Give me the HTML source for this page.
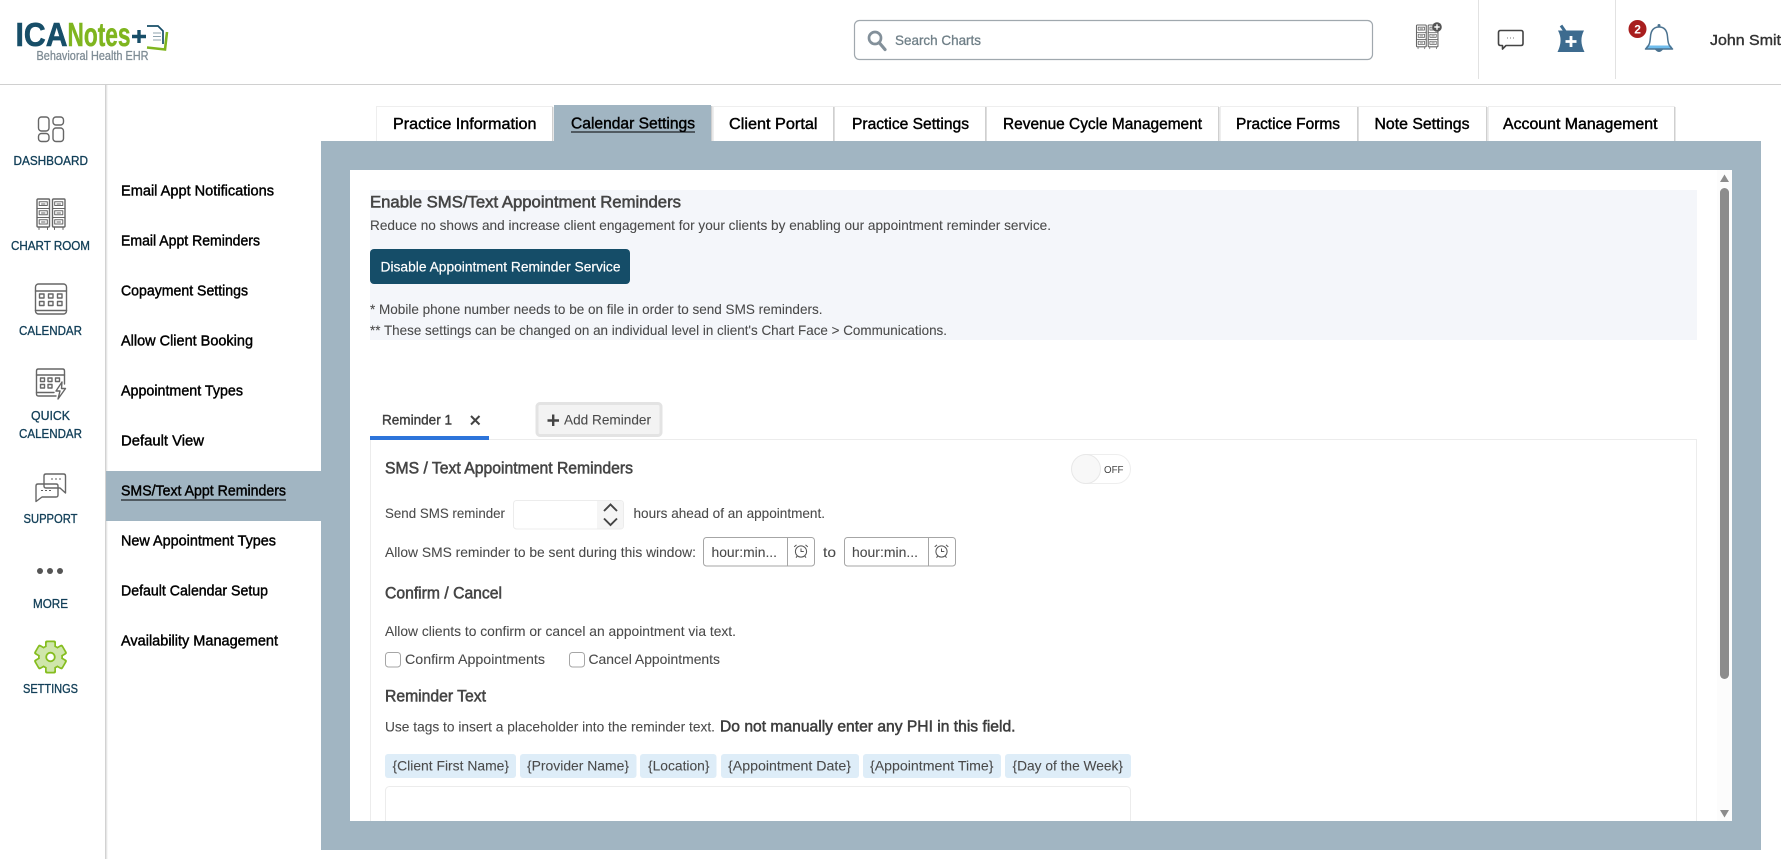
<!DOCTYPE html>
<html lang="en">
<head>
<meta charset="utf-8">
<title>ICANotes - Calendar Settings</title>
<style>
html,body{margin:0;padding:0;background:#fff;width:1781px;height:859px;overflow:hidden}
svg{display:block}
text{font-family:"Liberation Sans",sans-serif;white-space:pre}
.nav{font-size:12.5px;fill:#123f58;stroke:#123f58;stroke-width:.32}
.sub{font-size:14.5px;fill:#000;stroke:#000;stroke-width:.42}
.tab{font-size:15.5px;fill:#000;stroke:#000;stroke-width:.42}
.b{font-size:14px;fill:#4a4a4a;stroke:#4a4a4a;stroke-width:.08}
.h{font-size:16.5px;fill:#454545;stroke:#454545;stroke-width:.55}
.chip{font-size:14px;fill:#4a4a4a;stroke:#4a4a4a;stroke-width:.08}
.ic{fill:none;stroke:#666;stroke-width:1.4;stroke-linejoin:round;stroke-linecap:round}
</style>
</head>
<body>
<svg xmlns="http://www.w3.org/2000/svg" width="1781" height="859" viewBox="0 0 1781 859">
<defs>
<linearGradient id="sh" x1="0" x2="1" y1="0" y2="0"><stop offset="0" stop-color="#dedede"/><stop offset="1" stop-color="#fff"/></linearGradient>
<g id="cab" class="ic">
<rect x="0" y="0" width="12.5" height="28" rx="1"/>
<path d="M0 9.5H12.5M0 18.5H12.5M2 28.8V30.5M10.5 28.8V30.5M2.2 2.8H10.3V6.5H2.2ZM2.2 11.8H10.3V15.8H2.2ZM2.2 20.8H10.3V25H2.2ZM4.5 5H8M4.5 14H8M4.5 23H8" stroke-width="1"/>
</g>
<g id="clock" fill="none" stroke="#555" stroke-width="1">
<circle cx="0" cy="0" r="5.6"/>
<path d="M0 -3V0H2.8M-4.5 -6.6L-6.8 -4.6M4.5 -6.6L6.8 -4.6M-3.8 4.6L-5 6.2M3.8 4.6L5 6.2"/>
</g>
</defs>

<!-- page / header -->
<rect width="1781" height="859" fill="#fff"/>
<rect x="0" y="84" width="1781" height="1" fill="#d0d0d0"/>
<rect x="105" y="85" width="1" height="774" fill="#d2d2d2"/>
<rect x="106" y="85" width="2" height="774" fill="url(#sh)"/>

<!-- logo -->
<text x="15.500" y="46" font-weight="700" fill="#174e68" stroke="#174e68" stroke-width=".6" textLength="52" lengthAdjust="spacingAndGlyphs" style="font-size:33px">ICA</text>
<text x="67.500" y="46" font-weight="700" fill="#7fb51f" stroke="#7fb51f" stroke-width=".5" textLength="63" lengthAdjust="spacingAndGlyphs" style="font-size:33px">Notes</text>
<path d="M132 36.500H146M139 30V43" stroke="#174e68" stroke-width="3.400" fill="none"/>
<path d="M147 26H158L163 31V44" fill="none" stroke="#174e68" stroke-width="1.700"/>
<path d="M147 47.500L165 49.500L167 32" fill="none" stroke="#7fb51f" stroke-width="2.600"/>
<path d="M153 33H161M153 36.500H161M153 40H161" stroke="#8fa3ae" stroke-width="1"/>
<text x="36.500" y="60" style="font-size:13px;fill:#7f8c95;stroke:#7f8c95;stroke-width:.3" textLength="112" lengthAdjust="spacingAndGlyphs">Behavioral Health EHR</text>

<!-- search -->
<rect x="854.500" y="20.500" width="518" height="39" rx="5" fill="#fff" stroke="#a0a8ae" stroke-width="1.200"/>
<circle cx="875" cy="38" r="6" fill="none" stroke="#83909a" stroke-width="2.700"/>
<path d="M879.500 43L885 49.500" stroke="#83909a" stroke-width="3.200" stroke-linecap="round"/>
<text x="895" y="45" style="font-size:14px;fill:#6f7f87;stroke:#6f7f87;stroke-width:.3" textLength="86" lengthAdjust="spacingAndGlyphs">Search Charts</text>

<!-- header icons -->
<g transform="translate(1416.500,25) scale(.78)"><use href="#cab"/><use href="#cab" x="15"/></g>
<circle cx="1437" cy="27" r="4.800" fill="#555"/>
<path d="M1434.300 27H1439.700M1437 24.300V29.700" stroke="#fff" stroke-width="1.400"/>
<rect x="1478" y="0" width="1" height="79" fill="#e2e2e2"/>
<rect x="1615" y="0" width="1" height="79" fill="#e2e2e2"/>
<path d="M1500.500 30.500H1521Q1523 30.500 1523 32.500V43.500Q1523 45.500 1521 45.500H1506L1502.500 49V45.500H1500.500Q1498.500 45.500 1498.500 43.500V32.500Q1498.500 30.500 1500.500 30.500Z" fill="#fff" stroke="#444" stroke-width="1.600" stroke-linejoin="round"/>
<path d="M1507 38H1508M1510 38H1511M1513 38H1514" stroke="#777" stroke-width="1"/>
<path d="M1558 30.500H1584C1580.500 37 1580.500 44 1584.500 52H1557.500C1561.500 44 1561.500 37 1558 30.500Z" fill="#3d6b8f"/>
<path d="M1561 25.500L1565.500 32" stroke="#3d6b8f" stroke-width="3"/>
<path d="M1571 36V47M1565.500 41.500H1576.500" stroke="#fff" stroke-width="2.800"/>
<path d="M1647 45.500H1671L1673 49H1645Z" fill="#6fbcec"/>
<path d="M1645.500 49C1650 45 1650 42 1650.500 36.500C1651 30 1654 27 1659 27C1664 27 1667 30 1667.500 36.500C1668 42 1668 45 1672.500 49Z" fill="none" stroke="#4c7390" stroke-width="1.500" stroke-linejoin="round"/>
<circle cx="1659" cy="25.500" r="1.500" fill="#4c7390"/>
<path d="M1655 49.500Q1659 54.500 1663 49.500Z" fill="#4c7390"/>
<circle cx="1637.500" cy="29" r="9" fill="#a81e1e"/>
<text x="1634.300" y="33.500" style="font-size:12px;font-weight:700;fill:#fff">2</text>
<text x="1710" y="45" style="font-size:15px;fill:#333;stroke:#333;stroke-width:.4" textLength="71" lengthAdjust="spacingAndGlyphs">John Smit</text>

<!-- left nav -->
<g class="ic">
<rect x="38.500" y="117" width="10.500" height="14" rx="3"/>
<rect x="53" y="117" width="10.500" height="8" rx="3"/>
<rect x="38.500" y="133.500" width="10.500" height="8" rx="3"/>
<rect x="53" y="128" width="10.500" height="13.500" rx="3"/>
</g>
<text class="nav" x="13.500" y="165" textLength="74.500" lengthAdjust="spacingAndGlyphs">DASHBOARD</text>

<use href="#cab" x="37" y="199"/><use href="#cab" x="52.500" y="199"/>
<text class="nav" x="11" y="250" textLength="79" lengthAdjust="spacingAndGlyphs">CHART ROOM</text>

<g class="ic">
<rect x="35.500" y="284" width="31" height="30" rx="3"/>
<path d="M35.500 291H66.500M35.500 310.500H66.500"/>
<rect x="39.500" y="294" width="4.500" height="4"/><rect x="48.500" y="294" width="4.500" height="4"/><rect x="57.500" y="294" width="4.500" height="4"/>
<rect x="39.500" y="301.500" width="4.500" height="4"/><rect x="48.500" y="301.500" width="4.500" height="4"/><rect x="57.500" y="301.500" width="4.500" height="4"/>
</g>
<text class="nav" x="19" y="335" textLength="63" lengthAdjust="spacingAndGlyphs">CALENDAR</text>

<g class="ic" stroke-width="1.200">
<path d="M56 396H38.500Q36.500 396 36.500 394V371Q36.500 369 38.500 369H62.500Q64.500 369 64.500 371V384"/>
<path d="M36.500 375H64.500M36.500 392.500H54"/>
<rect x="40.500" y="378" width="4" height="3.500"/><rect x="48" y="378" width="4" height="3.500"/><rect x="55.500" y="378" width="4" height="3.500"/>
<rect x="40.500" y="384.500" width="4" height="3.500"/><rect x="48" y="384.500" width="4" height="3.500"/>
<path d="M62 382L56 391H60L58 399L65.500 388.500H61.500Z" fill="#fff"/>
</g>
<text class="nav" x="31" y="420" textLength="39" lengthAdjust="spacingAndGlyphs">QUICK</text>
<text class="nav" x="19" y="438" textLength="63" lengthAdjust="spacingAndGlyphs">CALENDAR</text>

<g class="ic" stroke-width="1.300">
<path d="M46 474H63.500Q65.500 474 65.500 476V493L60 488H46Q44 488 44 486V476Q44 474 46 474Z"/>
<path d="M38 484H56Q58 484 58 486V495Q58 497 56 497H42L36 501.500V486Q36 484 38 484Z"/>
</g>
<path d="M51 479H53M55 479H57M59 479H61M41 490.500H43M45 490.500H47M49 490.500H51" stroke="#5c5c5c" stroke-width="1"/>
<text class="nav" x="23.500" y="523" textLength="54" lengthAdjust="spacingAndGlyphs">SUPPORT</text>

<circle cx="40" cy="571" r="3" fill="#555"/><circle cx="50" cy="571" r="3" fill="#555"/><circle cx="60" cy="571" r="3" fill="#555"/>
<text class="nav" x="33" y="608" textLength="35" lengthAdjust="spacingAndGlyphs">MORE</text>

<g transform="translate(50.500,657)">
<g fill="#85bd1e">
<circle r="12.500"/>
<rect x="-5.500" y="-16.500" width="11" height="33" rx="2"/>
<rect x="-5.500" y="-16.500" width="11" height="33" rx="2" transform="rotate(60)"/>
<rect x="-5.500" y="-16.500" width="11" height="33" rx="2" transform="rotate(120)"/>
</g>
<g fill="#cfe6ab">
<circle r="10.800"/>
<rect x="-3.800" y="-14.800" width="7.600" height="29.600" rx="1"/>
<rect x="-3.800" y="-14.800" width="7.600" height="29.600" rx="1" transform="rotate(60)"/>
<rect x="-3.800" y="-14.800" width="7.600" height="29.600" rx="1" transform="rotate(120)"/>
</g>
<circle r="4.300" fill="#fff" stroke="#85bd1e" stroke-width="1.800"/>
</g>
<text class="nav" x="23" y="693" textLength="55" lengthAdjust="spacingAndGlyphs">SETTINGS</text>

<!-- sub menu -->
<rect x="106" y="471" width="215" height="50" fill="#a1b5c2"/>
<text class="sub" x="121" y="195.500" textLength="153" lengthAdjust="spacingAndGlyphs">Email Appt Notifications</text>
<text class="sub" x="121" y="245.500" textLength="139" lengthAdjust="spacingAndGlyphs">Email Appt Reminders</text>
<text class="sub" x="121" y="295.500" textLength="127" lengthAdjust="spacingAndGlyphs">Copayment Settings</text>
<text class="sub" x="121" y="345.500" textLength="132" lengthAdjust="spacingAndGlyphs">Allow Client Booking</text>
<text class="sub" x="121" y="395.500" textLength="122" lengthAdjust="spacingAndGlyphs">Appointment Types</text>
<text class="sub" x="121" y="445.500" textLength="83" lengthAdjust="spacingAndGlyphs">Default View</text>
<text class="sub" x="121" y="495.500" textLength="165" lengthAdjust="spacingAndGlyphs">SMS/Text Appt Reminders</text>
<rect x="121" y="499.500" width="165" height="1" fill="#000"/>
<text class="sub" x="121" y="545.500" textLength="155" lengthAdjust="spacingAndGlyphs">New Appointment Types</text>
<text class="sub" x="121" y="595.500" textLength="147" lengthAdjust="spacingAndGlyphs">Default Calendar Setup</text>
<text class="sub" x="121" y="645.500" textLength="157" lengthAdjust="spacingAndGlyphs">Availability Management</text>

<!-- tabs -->
<g fill="#fff" stroke="#eeeeee" stroke-width="1">
<rect x="376.500" y="106.500" width="176" height="36"/>
<rect x="713.500" y="106.500" width="120" height="36"/>
<rect x="834.500" y="106.500" width="151" height="36"/>
<rect x="986.500" y="106.500" width="232" height="36"/>
<rect x="1220.500" y="106.500" width="137" height="36"/>
<rect x="1358.500" y="106.500" width="128" height="36"/>
<rect x="1488.500" y="106.500" width="186" height="36"/>
</g>
<g fill="#cfcfcf">
<rect x="552" y="107" width="1.500" height="35"/>
<rect x="833" y="107" width="1.500" height="35"/>
<rect x="985" y="107" width="1.500" height="35"/>
<rect x="1218" y="107" width="1.500" height="35"/>
<rect x="1357" y="107" width="1.500" height="35"/>
<rect x="1486" y="107" width="1.500" height="35"/>
<rect x="1674" y="107" width="1.500" height="35"/>
</g>
<rect x="554" y="105" width="157" height="37" fill="#a1b5c2"/>
<rect x="711" y="106" width="1.500" height="36" fill="#cfcfcf"/>
<text class="tab" x="393" y="129" textLength="143.500" lengthAdjust="spacingAndGlyphs">Practice Information</text>
<text class="tab" x="571" y="128.500" textLength="124" lengthAdjust="spacingAndGlyphs">Calendar Settings</text>
<rect x="571" y="131.500" width="124" height="1" fill="#000"/>
<text class="tab" x="729" y="129" textLength="88.500" lengthAdjust="spacingAndGlyphs">Client Portal</text>
<text class="tab" x="852" y="129" textLength="117" lengthAdjust="spacingAndGlyphs">Practice Settings</text>
<text class="tab" x="1003" y="129" textLength="199" lengthAdjust="spacingAndGlyphs">Revenue Cycle Management</text>
<text class="tab" x="1236" y="129" textLength="104" lengthAdjust="spacingAndGlyphs">Practice Forms</text>
<text class="tab" x="1374.500" y="129" textLength="95" lengthAdjust="spacingAndGlyphs">Note Settings</text>
<text class="tab" x="1503" y="129" textLength="154.500" lengthAdjust="spacingAndGlyphs">Account Management</text>

<!-- panel -->
<rect x="321" y="141" width="1440" height="709" fill="#a1b5c2"/>
<rect x="350" y="170" width="1382" height="651" fill="#fff"/>
<rect x="1717" y="170" width="15" height="651" fill="#fcfcfc"/>
<path d="M1720 182L1724.500 174.500L1729 182Z" fill="#8c8c8c"/>
<rect x="1720" y="188" width="9" height="491" rx="4.500" fill="#8c8c8c"/>
<path d="M1720 810L1724.500 817.500L1729 810Z" fill="#8c8c8c"/>

<!-- intro box -->
<rect x="370" y="190" width="1327" height="150" fill="#f4f6fa"/>
<text class="h" x="370" y="207.500" textLength="311" lengthAdjust="spacingAndGlyphs">Enable SMS/Text Appointment Reminders</text>
<text class="b" x="370" y="230" textLength="681" lengthAdjust="spacingAndGlyphs">Reduce no shows and increase client engagement for your clients by enabling our appointment reminder service.</text>
<rect x="370" y="249" width="260" height="35" rx="4" fill="#154d68"/>
<text x="380.500" y="271.500" style="font-size:14px;fill:#fff;stroke:#fff;stroke-width:.2" textLength="240" lengthAdjust="spacingAndGlyphs">Disable Appointment Reminder Service</text>
<text class="b" x="370" y="314" textLength="452.500" lengthAdjust="spacingAndGlyphs">* Mobile phone number needs to be on file in order to send SMS reminders.</text>
<text class="b" x="370" y="335" textLength="577" lengthAdjust="spacingAndGlyphs">** These settings can be changed on an individual level in client's Chart Face &gt; Communications.</text>

<!-- reminder tabs -->
<rect x="370.500" y="439.500" width="1326" height="400" fill="#fff" stroke="#ececec" stroke-width="1"/>
<rect x="370" y="436" width="119" height="4" fill="#2d74da"/>
<text x="382" y="424.500" style="font-size:14px;fill:#3f3f3f;stroke:#3f3f3f;stroke-width:.4" textLength="70" lengthAdjust="spacingAndGlyphs">Reminder 1</text>
<path d="M471 416L479.500 424.500M479.500 416L471 424.500" stroke="#444" stroke-width="2"/>
<rect x="537" y="403.500" width="124" height="32" rx="3" fill="#f3f3f3" stroke="#e3e3e3" stroke-width="3"/>
<path d="M547.500 420.500H559M553.200 414.500V426" stroke="#444" stroke-width="2.400"/>
<text class="b" x="564" y="424.500" textLength="87" lengthAdjust="spacingAndGlyphs">Add Reminder</text>

<!-- form -->
<text class="h" x="385" y="473.500" textLength="248" lengthAdjust="spacingAndGlyphs">SMS / Text Appointment Reminders</text>
<rect x="1072" y="454.500" width="58.500" height="29" rx="14.500" fill="#fff" stroke="#eeeeee"/>
<circle cx="1086" cy="469" r="14.500" fill="#f8f8f8" stroke="#e8e8e8"/>
<text x="1104" y="473" style="font-size:10px;fill:#444" textLength="19.500" lengthAdjust="spacingAndGlyphs">OFF</text>

<text class="b" x="385" y="518" textLength="120" lengthAdjust="spacingAndGlyphs">Send SMS reminder</text>
<rect x="513.500" y="500.500" width="110" height="28.500" rx="3" fill="#fff" stroke="#ececec"/>
<path d="M597 501H620.500Q623 501 623 503.500V526Q623 528.500 620.500 528.500H597Z" fill="#f5f5f5"/>
<path d="M604 511L610.500 504.500L617 511M604 518.500L610.500 525L617 518.500" fill="none" stroke="#444" stroke-width="1.900"/>
<text class="b" x="633.500" y="518" textLength="191.500" lengthAdjust="spacingAndGlyphs">hours ahead of an appointment.</text>

<text class="b" x="385" y="557" textLength="311" lengthAdjust="spacingAndGlyphs">Allow SMS reminder to be sent during this window:</text>
<rect x="703.500" y="537.500" width="111" height="28.500" rx="3" fill="#fff" stroke="#a6a6a6"/>
<rect x="787" y="538" width="1" height="28" fill="#a6a6a6"/>
<text class="b" x="711.500" y="557" textLength="65.500" lengthAdjust="spacingAndGlyphs">hour:min...</text>
<use href="#clock" x="801" y="551.500"/>
<text class="b" x="823" y="557" textLength="13" lengthAdjust="spacingAndGlyphs">to</text>
<rect x="844.500" y="537.500" width="111" height="28.500" rx="3" fill="#fff" stroke="#a6a6a6"/>
<rect x="928" y="538" width="1" height="28" fill="#a6a6a6"/>
<text class="b" x="852" y="557" textLength="66" lengthAdjust="spacingAndGlyphs">hour:min...</text>
<use href="#clock" x="941.500" y="551.500"/>

<text class="h" x="385" y="598.500" textLength="117" lengthAdjust="spacingAndGlyphs">Confirm / Cancel</text>
<text class="b" x="385" y="636" textLength="351" lengthAdjust="spacingAndGlyphs">Allow clients to confirm or cancel an appointment via text.</text>
<rect x="385.500" y="652.500" width="15" height="14.500" rx="3" fill="#fff" stroke="#a6a6a6"/>
<text class="b" x="405" y="664" textLength="140" lengthAdjust="spacingAndGlyphs">Confirm Appointments</text>
<rect x="569.500" y="652.500" width="15" height="14.500" rx="3" fill="#fff" stroke="#a6a6a6"/>
<text class="b" x="588.500" y="664" textLength="131.500" lengthAdjust="spacingAndGlyphs">Cancel Appointments</text>

<text class="h" x="385" y="701.500" textLength="101" lengthAdjust="spacingAndGlyphs">Reminder Text</text>
<text class="b" x="385" y="731.500" textLength="330" lengthAdjust="spacingAndGlyphs">Use tags to insert a placeholder into the reminder text.</text>
<text x="720" y="731.500" style="font-size:16px;fill:#3d3d3d;stroke:#3d3d3d;stroke-width:.5" textLength="295.500" lengthAdjust="spacingAndGlyphs">Do not manually enter any PHI in this field.</text>

<g fill="#deedf8">
<rect x="385" y="754" width="131" height="24" rx="3"/>
<rect x="520" y="754" width="116.500" height="24" rx="3"/>
<rect x="640" y="754" width="76.500" height="24" rx="3"/>
<rect x="721" y="754" width="138" height="24" rx="3"/>
<rect x="863" y="754" width="138" height="24" rx="3"/>
<rect x="1005" y="754" width="126" height="24" rx="3"/>
</g>
<text class="chip" x="392.500" y="770.500" textLength="116.500" lengthAdjust="spacingAndGlyphs">{Client First Name}</text>
<text class="chip" x="527" y="770.500" textLength="102" lengthAdjust="spacingAndGlyphs">{Provider Name}</text>
<text class="chip" x="648" y="770.500" textLength="61.500" lengthAdjust="spacingAndGlyphs">{Location}</text>
<text class="chip" x="728" y="770.500" textLength="123" lengthAdjust="spacingAndGlyphs">{Appointment Date}</text>
<text class="chip" x="870" y="770.500" textLength="123.500" lengthAdjust="spacingAndGlyphs">{Appointment Time}</text>
<text class="chip" x="1012.500" y="770.500" textLength="110.500" lengthAdjust="spacingAndGlyphs">{Day of the Week}</text>

<rect x="385.500" y="786.500" width="745" height="60" rx="4" fill="#fff" stroke="#ececec"/>

<!-- bottom panel strip covers overflow -->
<rect x="321" y="821" width="1440" height="29" fill="#a1b5c2"/>
</svg>
</body>
</html>
